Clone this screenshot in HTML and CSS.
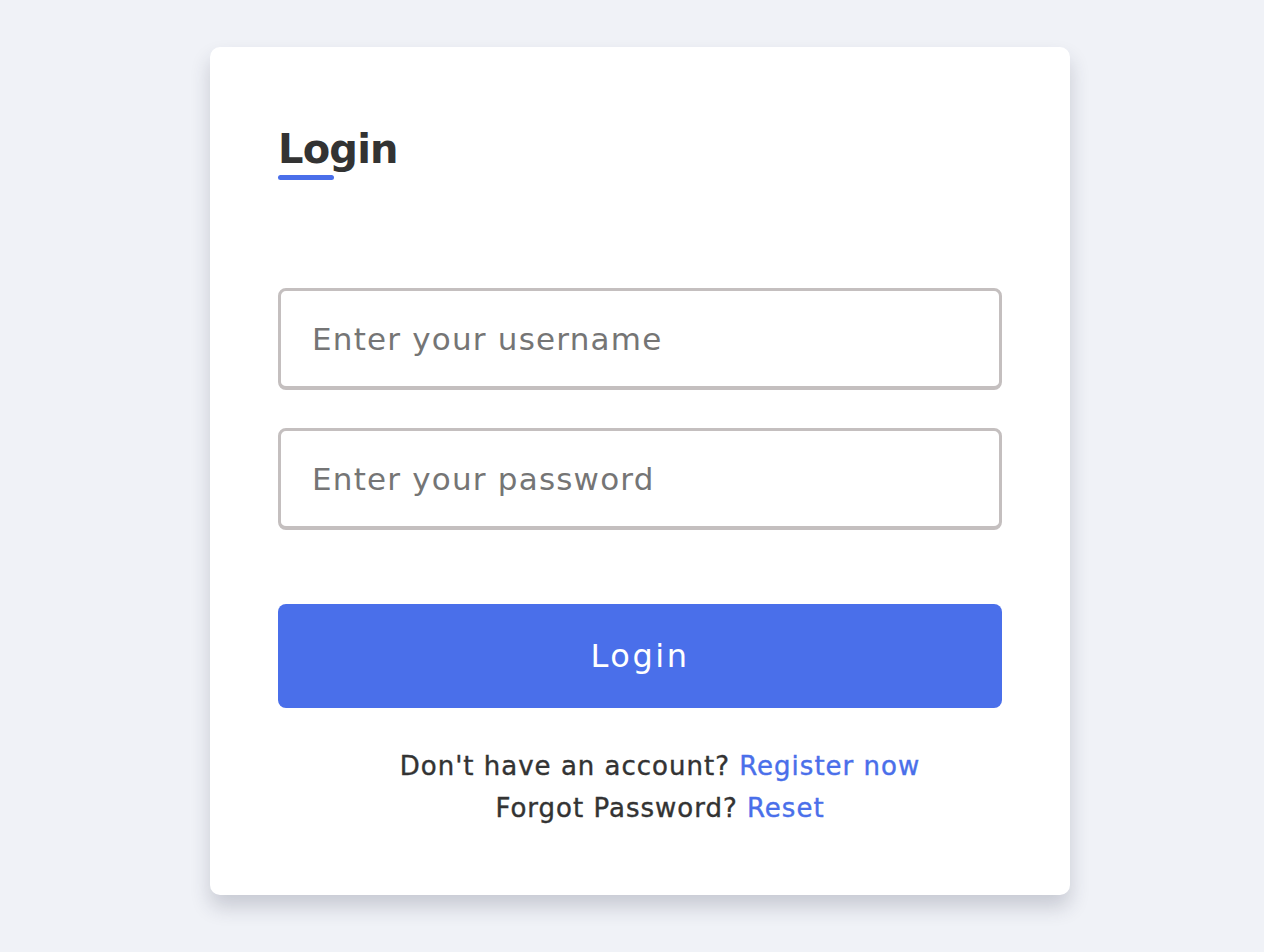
FILE: index.html
```html
<!DOCTYPE html>
<html lang="en">
<head>
<meta charset="utf-8">
<title>Login</title>
<link rel="stylesheet" href="styles.css">
</head>
<body>
<main class="page">
  <section class="card">
    <h1 class="title">Login</h1>
    <form class="form">
      <input class="field" type="text" placeholder="Enter your username">
      <input class="field" type="password" placeholder="Enter your password">
      <button class="btn" type="button">Login</button>
    </form>
    <div class="links">
      <p>Don't have an account? <a href="#">Register now</a></p>
      <p>Forgot Password? <a href="#">Reset</a></p>
    </div>
  </section>
</main>
</body>
</html>
```
FILE: styles.css
```css
* { box-sizing: border-box; }
html, body { margin: 0; padding: 0; }
body {
  background: #f0f2f7;
  font-family: "DejaVu Sans", "Noto Sans", sans-serif;
  color: #333;
  min-height: 952px;
}
.page {
  display: flex;
  justify-content: center;
  padding: 47px 0 0 16px;
}
.card {
  width: 860px;
  height: 848px;
  background: #fff;
  border-radius: 10px;
  box-shadow: 0 12px 20px rgba(40, 44, 70, 0.2);
  padding: 78px 68px 0;
}
.title {
  margin: 0;
  font-size: 40px;
  font-weight: 700;
  line-height: 48px;
  color: #333;
  letter-spacing: -0.8px;
}
.title::after {
  content: "";
  display: block;
  width: 56px;
  height: 5px;
  border-radius: 3px;
  background: #4a6fea;
  margin-top: 2px;
}
.form {
  display: flex;
  flex-direction: column;
  margin-top: 108px;
}
.field {
  height: 102px;
  border: 3px solid #c4bfbf;
  border-bottom-width: 4px;
  border-radius: 8px;
  padding: 0 31px;
  font-family: inherit;
  font-size: 31px;
  letter-spacing: 1.2px;
  color: #333;
  outline: none;
  background: #fff;
  margin-bottom: 38px;
}
.field::placeholder { color: #757575; }
.btn {
  margin-top: 36px;
  height: 104px;
  border: none;
  border-radius: 8px;
  background: #4a6fea;
  color: #fff;
  font-family: inherit;
  font-size: 32px;
  letter-spacing: 2.5px;
}
.links {
  margin-top: 37px;
  padding-left: 40px;
  text-align: center;
  font-size: 26px;
  line-height: 42px;
  letter-spacing: 1px;
  -webkit-text-stroke: 0.4px currentColor;
}
.links p { margin: 0; }
.links a { color: #4a6fea; text-decoration: none; }
```
